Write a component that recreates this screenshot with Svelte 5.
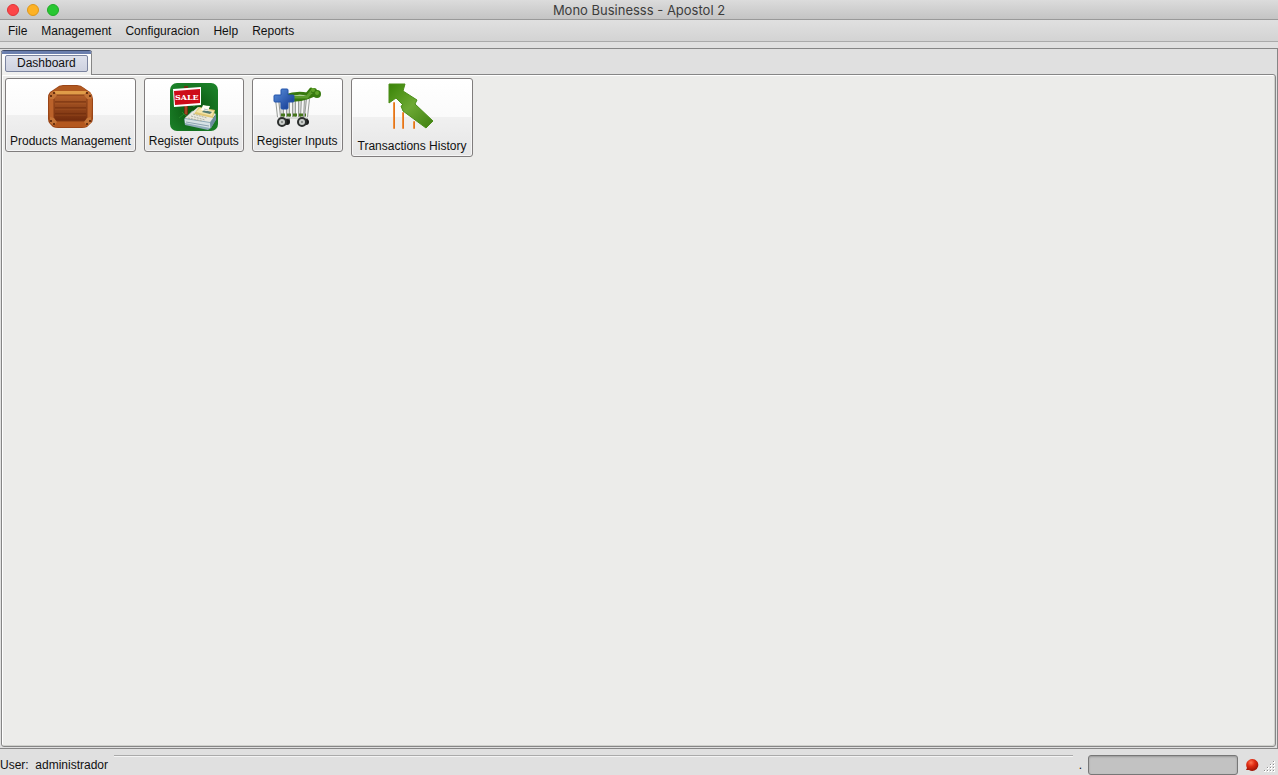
<script>
  const menus = ['File', 'Management', 'Configuracion', 'Help', 'Reports'];

  const actions = [
    { id: 'products', label: 'Products Management' },
    { id: 'outputs', label: 'Register Outputs' },
    { id: 'inputs', label: 'Register Inputs' },
    { id: 'history', label: 'Transactions History' },
  ];

  let user = $state('administrador');
  let progress = $state(0);
</script>

<div class="window">
  <header class="titlebar">
    <div class="lights">
      <button class="light red" aria-label="Close"></button>
      <button class="light yellow" aria-label="Minimize"></button>
      <button class="light green" aria-label="Zoom"></button>
    </div>
    <h1>Mono Businesss - Apostol 2</h1>
  </header>

  <nav class="menubar">
    {#each menus as menu}
      <button class="menu">{menu}</button>
    {/each}
  </nav>

  <main class="workspace">
    <div class="tabs" role="tablist">
      <button class="tab" role="tab" aria-selected="true"><span>Dashboard</span></button>
    </div>

    <section class="pane" role="tabpanel">
      {#each actions as action}
        <button class="action {action.id}">
          {#if action.id === 'products'}
            <svg width="48" height="48" viewBox="0 0 48 48" aria-hidden="true">
              <defs>
                <linearGradient id="wood" x1="0" y1="0" x2="0" y2="1">
                  <stop offset="0" stop-color="#c46a2b" />
                  <stop offset="1" stop-color="#a04a18" />
                </linearGradient>
                <linearGradient id="planks" x1="0" y1="0" x2="0" y2="1">
                  <stop offset="0" stop-color="#b4602a" />
                  <stop offset="1" stop-color="#702a0c" />
                </linearGradient>
              </defs>
              <path d="M10 5Q13 2 17 2H31Q35 2 38 5L44 9Q47 12 47 16V36Q47 39 44 41L41 44Q39 45 36 45H12Q9 45 7 44L4 41Q2 39 2 36V15Q2 11 4 9Z" fill="#9a4517" />
              <path d="M11 5Q14 3 17 3H31Q35 3 38 5L41 8H7Z" fill="#b05820" />
              <path d="M7 8H42L46 13V37L40 44H9L3 37V13Z" fill="url(#wood)" />
              <path d="M8 8H41L39 12H10Z" fill="#e09c48" />
              <path d="M3 13L8 9V39L4 37ZM46 13L41 9V39L45 37Z" fill="#bb622a" />
              <path d="M8 38H41L40 44H9Z" fill="#b4581f" />
              <rect x="8" y="12" width="33" height="26" fill="url(#planks)" stroke="#843b14" />
              <path d="M9 19H40M9 25H40M9 31H40" stroke="#6b290b" />
              <path d="M9 20H40M9 26H40M9 32H40" stroke="#c36a32" stroke-opacity=".3" />
              <path d="M4 10L8 8L11 12L8 16L4 16ZM45 10L41 8L38 12L41 16L45 16ZM4 34L8 35L11 39L8 43L4 40ZM45 34L41 35L38 39L41 43L45 40Z" fill="#c47437" />
              <g fill="#4d1b05">
                <circle cx="5" cy="13" r="1" /><circle cx="8" cy="10" r="1" />
                <circle cx="44" cy="13" r="1" /><circle cx="41" cy="10" r="1" />
                <circle cx="5" cy="38" r="1" /><circle cx="8" cy="41" r="1" />
                <circle cx="44" cy="38" r="1" /><circle cx="41" cy="41" r="1" />
              </g>
            </svg>
          {:else if action.id === 'outputs'}
            <svg width="48" height="48" viewBox="0 0 48 48" aria-hidden="true">
              <defs>
                <radialGradient id="grass" cx=".5" cy=".55" r=".7">
                  <stop offset="0" stop-color="#0a520e" />
                  <stop offset="1" stop-color="#1c852b" />
                </radialGradient>
              </defs>
              <rect width="48" height="48" rx="7" fill="url(#grass)" />
              <path d="M14 3H18V31L16 34L14 31Z" fill="#713114" />
              <path d="M16 22V31" stroke="#a14a22" stroke-width="2" />
              <path d="M9 35L14 31L19 35M12 29L17 34L23 27M20 20L24 24L27 18" fill="none" stroke="#238529" stroke-width="1" />
              <path d="M3 6L31 4V22L4 24Z" fill="#fff" />
              <path d="M4 8L30 6V20L5 22Z" fill="#cd0b18" />
              <text x="5" y="17" class="sale">SALE</text>
              <path d="M14 36L22 28L46 36L41 45L38 47L15 42Z" fill="#8eaab7" />
              <path d="M15 35L28 24L46 31L40 39Z" fill="#e9e8df" />
              <path d="M15 36L40 40V45L15 40Z" fill="#d7e2e4" />
              <path d="M40 40L46 31V37L41 45Z" fill="#6c8b9d" />
              <path d="M24 31L29 24L45 27L43 35Z" fill="#dfc675" />
              <path d="M26 29L30 25L44 28L42 33Z" fill="#f3e5aa" />
              <path d="M32 29L34 27L42 29L40 31Z" fill="#557b72" />
              <path d="M31 27L33 22Q37 23 40 23L38 28Z" fill="#fffdf4" />
              <path d="M34 26L38 27" stroke="#a7bcc0" />
              <path d="M21 33L35 37M23 31L37 35M18 35L32 38" stroke="#b0b19f" stroke-width="1" stroke-dasharray="2 1" />
              <path d="M16 39L39 43" stroke="#8ca4b1" />
            </svg>
          {:else if action.id === 'inputs'}
            <svg width="48" height="48" viewBox="0 0 48 48" aria-hidden="true">
              <defs>
                <linearGradient id="cross" x1="0" y1="0" x2="1" y2="1">
                  <stop offset="0" stop-color="#5a90dc" />
                  <stop offset="1" stop-color="#10358d" />
                </linearGradient>
              </defs>
              <path d="M2 15H36L34 35H5Z" fill="#d4d6d4" />
              <path d="M4 16L6 34M12 16V34M18 16V34M24 16V34M30 16L29 34M35 16L33 34" stroke="#989c98" stroke-width="4" />
              <path d="M4 16L6 34M12 16V34M18 16V34M24 16V34M30 16L29 34M35 16L33 34" stroke="#f7f7f7" stroke-width="2" />
              <path d="M8 32H33" stroke="#44751b" stroke-width="3" stroke-dasharray="4 2" />
              <path d="M5 35H34" stroke="#d8dad8" stroke-width="2" />
              <path d="M12 13Q23 9 34 11L38 6" fill="none" stroke="#37790c" stroke-width="3" stroke-linecap="round" />
              <path d="M12 16Q24 18 35 14L43 11" fill="none" stroke="#37790c" stroke-width="4" stroke-linecap="round" />
              <path d="M15 14H34L39 8" fill="none" stroke="#5d9c2c" stroke-width="3" stroke-linecap="round" />
              <circle cx="41" cy="8" r="3" fill="#397b12" />
              <circle cx="44" cy="11" r="4" fill="#397b12" />
              <circle cx="40" cy="7" r="2" fill="#63a42c" />
              <circle cx="44" cy="10" r="2" fill="#63a42c" />
              <path d="M7 37H17M26 37H35" stroke="#6b706c" stroke-width="3" />
              <g fill="#171919">
                <circle cx="14" cy="39" r="3" /><circle cx="33" cy="39" r="3" />
              </g>
              <g fill="#c9cdca" stroke="#2d302f" stroke-width="2">
                <circle cx="9" cy="39" r="4" /><circle cx="29" cy="39" r="4" />
              </g>
              <g fill="#777b78"><circle cx="9" cy="39" r="1" /><circle cx="29" cy="39" r="1" /></g>
              <path d="M8 7Q8 6 9 6H14Q15 6 15 7V12H20Q21 12 21 13V18Q21 19 20 19H15V25Q15 26 14 26H9Q8 26 8 25V19H2Q1 19 1 18V13Q1 12 2 12H8Z" fill="url(#cross)" stroke="#2454aa" />
            </svg>
          {:else}
            <svg width="48" height="53" viewBox="0 0 48 53" aria-hidden="true">
              <defs>
                <linearGradient id="arrow" x1="0" y1="0" x2="1" y2="1">
                  <stop offset="0" stop-color="#398407" />
                  <stop offset=".5" stop-color="#6da933" />
                  <stop offset="1" stop-color="#3d7e10" />
                </linearGradient>
                <linearGradient id="bar" x1="0" y1="0" x2="1" y2="0">
                  <stop offset="0" stop-color="#f7a04b" />
                  <stop offset="1" stop-color="#dc650d" />
                </linearGradient>
              </defs>
              <g fill="url(#bar)">
                <rect x="5" y="19" width="2" height="27" rx="1" />
                <rect x="14" y="29" width="2" height="17" rx="1" />
                <rect x="25" y="38" width="2" height="8" rx="1" />
              </g>
              <path d="M1 1H17L15 8L29 17L27 21L45 38L38 45L15 28L13 23L15 22L8 15L1 20Z" fill="url(#arrow)" stroke="#4b8d18" stroke-linejoin="round" />
            </svg>
          {/if}
          <span>{action.label}</span>
        </button>
      {/each}
    </section>
  </main>

  <footer class="statusbar">
    <span class="user">User:&nbsp; {user}</span>
    <span class="groove"></span>
    <span class="dot">.</span>
    <progress aria-label="Progress" value={progress} max="100"></progress>
    <svg class="led" width="14" height="14" viewBox="0 0 14 14" aria-hidden="true">
      <defs>
        <radialGradient id="led" cx=".4" cy=".3" r=".7">
          <stop offset="0" stop-color="#ff7350" />
          <stop offset=".45" stop-color="#df2b12" />
          <stop offset="1" stop-color="#9c1305" />
        </radialGradient>
      </defs>
      <path d="M7 1A6 6 0 1 1 4 12L1 12L2 10A6 6 0 0 1 7 1Z" fill="url(#led)" />
    </svg>
    <svg class="grip" width="12" height="12" viewBox="0 0 12 12" aria-hidden="true">
      <g fill="#fff">
        <path d="M10 1h2v2h-2zM7 4h2v2h-2zM10 4h2v2h-2zM4 7h2v2h-2zM7 7h2v2h-2zM10 7h2v2h-2zM1 10h2v2h-2zM4 10h2v2h-2zM7 10h2v2h-2zM10 10h2v2h-2z" />
      </g>
      <g fill="#8e8e8e">
        <path d="M10 1h1v1h-1zM7 4h1v1h-1zM10 4h1v1h-1zM4 7h1v1h-1zM7 7h1v1h-1zM10 7h1v1h-1zM1 10h1v1h-1zM4 10h1v1h-1zM7 10h1v1h-1zM10 10h1v1h-1z" />
      </g>
    </svg>
  </footer>
</div>

<style>
  :global(body) { margin: 0; background: #e0e0e0; }

  .window { height: 100vh; display: flex; flex-direction: column; overflow: hidden; background: #e0e0e0; color: #111; font: 12px/14px "Liberation Sans", Arial, sans-serif; }
  button { margin: 0; padding: 0; border: 0; background: none; color: inherit; font: inherit; }

  .titlebar { flex: none; height: 19px; display: grid; grid-template-columns: 1fr auto 1fr; align-items: center; border-bottom: 1px solid #999; background: linear-gradient(#dcdcdc, #c4c4c4); }
  .lights { display: flex; gap: 8px; padding-left: 7px; }
  .light { width: 12px; height: 12px; border: 1px solid; border-radius: 50%; }
  .red { background: #fc4648; border-color: #df3437; }
  .yellow { background: #fdb225; border-color: #df971a; }
  .green { background: #28c732; border-color: #1faa27; }
  h1 { margin: 0; font: 13px/18px Inter, "Liberation Sans", sans-serif; color: #3c3c3c; }

  .menubar { flex: none; height: 21px; display: flex; align-items: center; gap: 14px; padding-left: 8px; border-bottom: 1px solid #aaa; background: linear-gradient(#e0e0e0, #d3d3d3); }

  .workspace { flex: 1; min-height: 0; display: flex; flex-direction: column; margin-top: 6px; padding: 1px; border: 1px solid #868686; border-left: 0; }
  .tabs { display: flex; }
  .tab { position: relative; z-index: 1; margin: 1px 0 -1px; padding: 1px 3px 3px; border: solid #868686; border-width: 3px 1px 0; border-top-color: #6b7fae; border-radius: 3px 3px 0 0; background: linear-gradient(#fff, #efefed); box-shadow: 0 -1px #3d4966; }
  .tab span { display: block; padding: 0 11px 1px; border: 1px solid #7b849f; border-radius: 2px; background: linear-gradient(#dee1ec, #ced2e0); }

  .pane { flex: 1; display: flex; align-items: flex-start; gap: 8px; padding: 3px; border: 1px solid #868686; border-radius: 0 3px 3px 3px; background: #ececea; box-shadow: inset 1px 1px #fff, inset -1px -1px #cfd0cc; }
  .action { display: flex; flex-direction: column; align-items: center; gap: 3px; padding: 4px 4px 3px; border: 1px solid #807d7d; border-radius: 3px; background: linear-gradient(#fff, #fafafa 50%, #f0f0f0 50%, #e6e6e6); box-shadow: inset 0 0 0 1px #fff9; }
  .action svg { display: block; }
  .history { padding-inline: 6px; }
  .sale { fill: #fff; font: bold 8px "DejaVu Serif", serif; }

  .statusbar { flex: none; height: 26px; display: flex; align-items: center; }
  .user { padding-top: 6px; }
  .groove { flex: 1; align-self: flex-start; height: 1px; margin: 6px 6px 0; border-top: 1px solid #aaa; background: #f4f4f4; }
  .dot { padding-top: 6px; }
  progress { appearance: none; box-sizing: border-box; align-self: flex-end; width: 150px; height: 20px; margin-left: 6px; border: 1px solid #777; border-radius: 3px; background: #c2c2c2; box-shadow: inset 0 1px 2px #999; }
  progress::-webkit-progress-bar { background: none; }
  .led { margin: 6px 4px 0 7px; }
  .grip { align-self: flex-end; margin: 0 3px 3px 0; }
</style>
